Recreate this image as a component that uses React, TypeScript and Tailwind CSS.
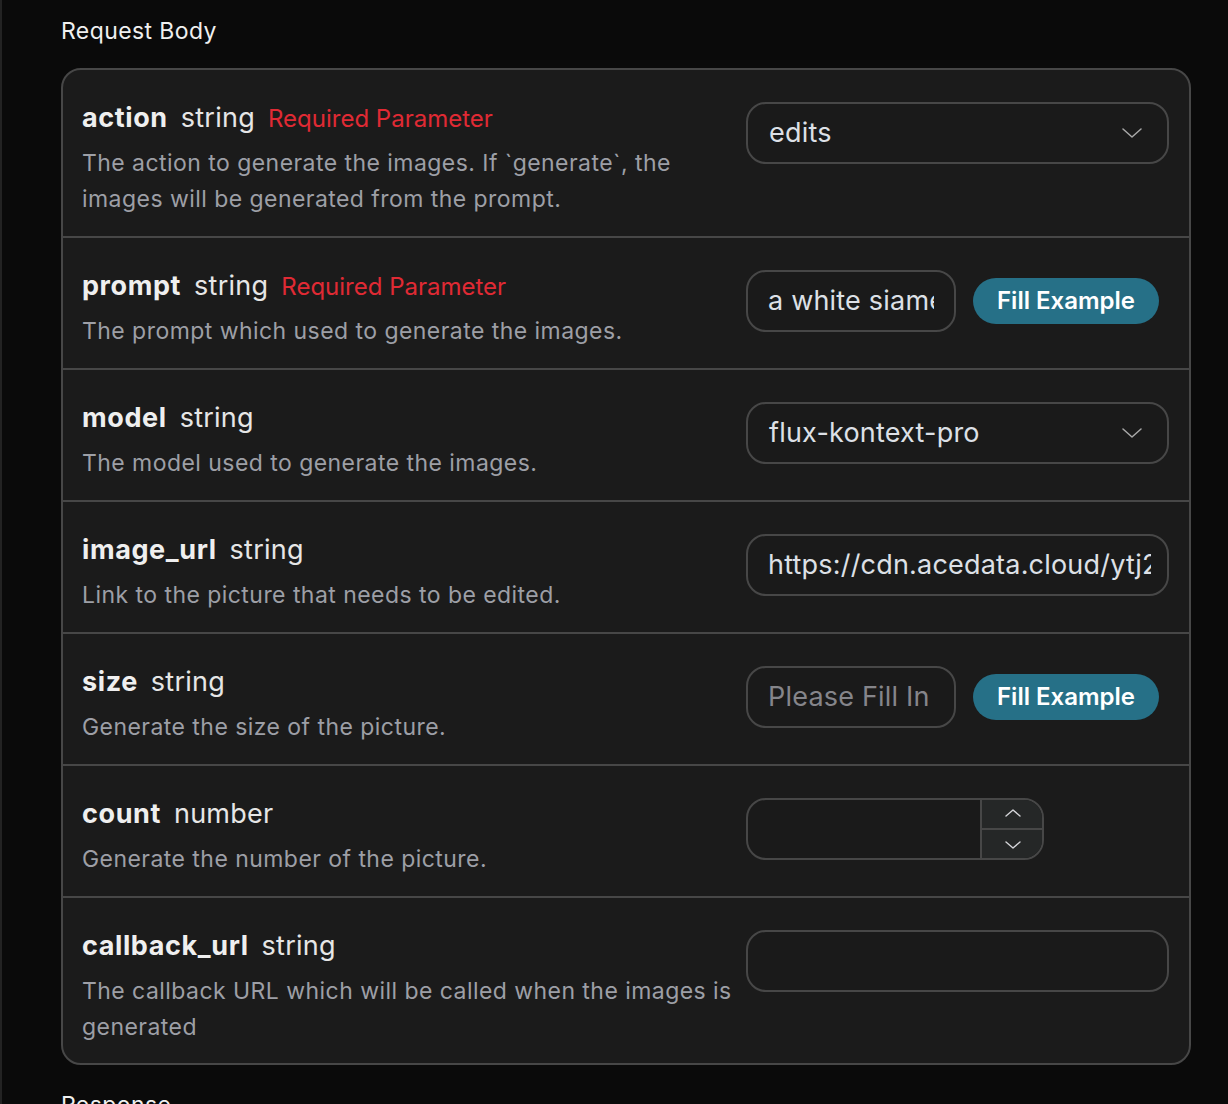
import React from "react";

function Chevron({ className }: { className?: string }) {
  return (
    <svg className={className} viewBox="0 0 20 10" fill="none" stroke="currentColor" strokeWidth="1.5" strokeLinecap="round" strokeLinejoin="round">
      <path d="M1 1 L10 9 L19 1" />
    </svg>
  );
}

function SmallChevron({ up }: { up?: boolean }) {
  return (
    <svg width="16" height="8" viewBox="0 0 16 8" fill="none" stroke="#d4d4d8" strokeWidth="1.4" strokeLinecap="round" strokeLinejoin="round">
      {up ? <path d="M1 7 L8 1 L15 7" /> : <path d="M1 1 L8 7 L15 1" />}
    </svg>
  );
}

type Row = {
  name: string;
  type: string;
  required?: boolean;
  desc: string;
  control: React.ReactNode;
};

const inputBase =
  "h-[62px] rounded-[20px] border-2 border-[#474747] bg-[#1a1a1a] flex items-center text-[27px] tracking-[0.2px] text-[#dde0e6] overflow-hidden min-w-0";

function FillButton() {
  return (
    <button className="h-[46px] w-[186px] rounded-full bg-[#267087] text-white text-[24px] font-semibold flex items-center justify-center shrink-0">
      Fill Example
    </button>
  );
}

const rows: Row[] = [
  {
    name: "action",
    type: "string",
    required: true,
    desc: "The action to generate the images. If `generate`, the images will be generated from the prompt.",
    control: (
      <div className={inputBase + " w-full px-[21px] justify-between"}>
        <span className="pt-[1px]">edits</span>
        <Chevron className="w-[20px] h-[10px] text-[#a8a8a8] mr-[4px]" />
      </div>
    ),
  },
  {
    name: "prompt",
    type: "string",
    required: true,
    desc: "The prompt which used to generate the images.",
    control: (
      <div className="flex items-center gap-[17px]">
        <div className={inputBase + " w-[210px] shrink-0 px-[20px]"}>
          <span className="block whitespace-nowrap overflow-hidden w-full pt-[1px]">a white siamese cat</span>
        </div>
        <FillButton />
      </div>
    ),
  },
  {
    name: "model",
    type: "string",
    desc: "The model used to generate the images.",
    control: (
      <div className={inputBase + " w-full px-[21px] justify-between"}>
        <span className="pt-[1px]">flux-kontext-pro</span>
        <Chevron className="w-[20px] h-[10px] text-[#a8a8a8] mr-[4px]" />
      </div>
    ),
  },
  {
    name: "image_url",
    type: "string",
    desc: "Link to the picture that needs to be edited.",
    control: (
      <div className={inputBase + " w-full pl-[20px] pr-[16px]"}>
        <span className="block whitespace-nowrap overflow-hidden w-full min-w-0 pt-[1px]">https://cdn.acedata.cloud/ytj2qy.png</span>
      </div>
    ),
  },
  {
    name: "size",
    type: "string",
    desc: "Generate the size of the picture.",
    control: (
      <div className="flex items-center gap-[17px]">
        <div className={inputBase + " w-[210px] shrink-0 px-[20px]"}>
          <span className="whitespace-nowrap text-[#85858a] pt-[1px]">Please Fill In</span>
        </div>
        <FillButton />
      </div>
    ),
  },
  {
    name: "count",
    type: "number",
    desc: "Generate the number of the picture.",
    control: (
      <div className="h-[62px] w-[298px] rounded-[20px] border-2 border-[#474747] bg-[#1a1a1a] flex overflow-hidden">
        <div className="flex-1" />
        <div className="w-[64px] border-l-2 border-[#474747] bg-[#252727] flex flex-col -my-[2px] -mr-[2px] rounded-r-[18px] overflow-hidden">
          <div className="flex-1 flex items-center justify-center border-b-2 border-[#474747]">
            <SmallChevron up />
          </div>
          <div className="flex-1 flex items-center justify-center">
            <SmallChevron />
          </div>
        </div>
      </div>
    ),
  },
  {
    name: "callback_url",
    type: "string",
    desc: "The callback URL which will be called when the images is generated",
    control: <div className={inputBase + " w-full"} />,
  },
];

export default function App() {
  return (
    <div
      className="min-h-[1104px] bg-[#0a0a0a] border-l-2 border-[#232323] pl-[59px] pr-[35px] pt-[12px] overflow-hidden"
      style={{ fontFamily: "Inter, 'Noto Sans', sans-serif" }}
    >
      <div className="text-[23px] leading-[36px] tracking-[0.4px] text-[#f0f0f0] mb-[20px] pt-[1px] h-[37px]">Request Body</div>
      <div className="w-[1130px] rounded-[20px] border-2 border-[#474747] bg-[#1b1b1b] overflow-hidden -mt-[1px]">
        {rows.map((r, i) => (
          <div
            key={r.name}
            className={
              "flex gap-[14px] pl-[19px] pr-[20px] pt-[30px] " +
              (i === rows.length - 1 ? "pb-[18px] " : "pb-[19px] ") +
              (i > 0 ? "border-t-2 border-[#474747]" : "")
            }
          >
            <div className="w-[650px] shrink-0">
              <div className="flex items-baseline h-[36px] leading-[36px] mb-[9px] whitespace-nowrap">
                <span className="text-[27px] font-bold tracking-[0.6px] text-[#efefef]">{r.name}</span>
                <span className="text-[27px] tracking-[0.25px] text-[#e6e6e6] ml-[13px]">{r.type}</span>
                {r.required && (
                  <span className="text-[24px] text-[#e02a34] ml-[13px]">Required Parameter</span>
                )}
              </div>
              <div className="text-[23px] leading-[36px] tracking-[0.45px] text-[#9d9fa6]">{r.desc}</div>
            </div>
            <div className="flex-1 min-w-0 pt-[2px]">{r.control}</div>
          </div>
        ))}
      </div>
      <div className="text-[23px] leading-[36px] tracking-[0.4px] text-[#f0f0f0] mt-[22px]">Response</div>
    </div>
  );
}
